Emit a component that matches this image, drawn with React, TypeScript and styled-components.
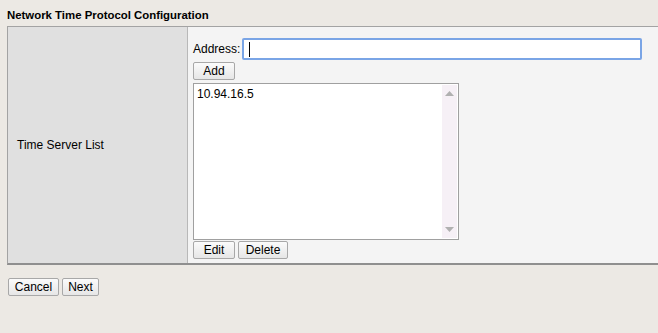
import * as React from "react";
import styled, {createGlobalStyle} from "styled-components";

const GlobalStyle = createGlobalStyle`
    html, body {
        margin: 0;
        padding: 0;
        background: #ece9e4;
        overflow: hidden;
    }
    body {
        font-family: "Liberation Sans", Arial, sans-serif;
        font-size: 12px;
        color: #000;
    }
`;

const Page = styled.div`
    width: 658px;
    height: 333px;
    padding-top: 8px;
    box-sizing: border-box;
`;

const Title = styled.div`
    font-weight: bold;
    font-size: 11.4px;
    line-height: 14px;
    padding-left: 7px;
    height: 18px;
`;

const ConfigTable = styled.div`
    display: grid;
    grid-template-columns: 180px 1fr;
    margin-left: 7px;
    border-top: 1px solid #a3a3a3;
    border-left: 1px solid #a3a3a3;
    border-bottom: 2px solid #8f8f8f;
    height: 239px;
    box-sizing: border-box;
`;

const LabelCell = styled.div`
    display: flex;
    align-items: center;
    background: #e0e0e0;
    border-right: 1px solid #b8b8b8;
    padding-left: 9px;
`;

const ValueCell = styled.div`
    display: flex;
    flex-direction: column;
    background: #f4f4f4;
    padding: 11px 16px 0 5px;
`;

const AddressRow = styled.div`
    display: flex;
    align-items: center;
    gap: 2px;
`;

const AddressInput = styled.div`
    flex: 1;
    height: 18px;
    background: #fff;
    border: 2px solid #7aa5e6;
    border-radius: 2px;
    display: flex;
    align-items: center;
    padding-left: 5px;
`;

const Caret = styled.span`
    width: 1px;
    height: 15px;
    background: #000;
`;

const Button = styled.button<{ w: number }>`
    width: ${p => p.w}px;
    height: 18px;
    padding: 0;
    font-family: "Liberation Sans", Arial, sans-serif;
    font-size: 12px;
    color: #000;
    background: linear-gradient(#fbfbfb, #e6e6e6);
    border: 1px solid #a8a8a8;
    border-radius: 2px;
    box-sizing: border-box;
`;

const ButtonRow = styled.div<{ top: number }>`
    display: flex;
    gap: 3px;
    margin-top: ${p => p.top}px;
`;

const ListBox = styled.div`
    display: flex;
    width: 266px;
    height: 157px;
    margin-top: 3px;
    background: #fff;
    border: 1px solid #a0a0a0;
    box-sizing: border-box;
`;

const ListItems = styled.div`
    flex: 1;
    padding: 3px 0 0 3px;
    line-height: 14px;
`;

const ScrollTrack = styled.div`
    width: 15px;
    margin: 1px 1px 1px 0;
    background: #f6f0f6;
    display: flex;
    flex-direction: column;
    justify-content: space-between;
    align-items: center;
    padding: 6px 0 6px;
`;

const Footer = styled.div`
    display: flex;
    gap: 3px;
    padding: 13px 0 0 8px;
`;

const Arrow = ({up}: { up: boolean }) => (
    <svg width="9" height="5" viewBox="0 0 9 5">
        <path d={up ? "M0 5 L4.5 0 L9 5 Z" : "M0 0 L4.5 5 L9 0 Z"} fill="#b0b0b0"/>
    </svg>
);

const App = () => {
    return (
        <Page>
            <GlobalStyle/>
            <Title>Network Time Protocol Configuration</Title>
            <ConfigTable>
                <LabelCell>Time Server List</LabelCell>
                <ValueCell>
                    <AddressRow>
                        <span>Address:</span>
                        <AddressInput><Caret/></AddressInput>
                    </AddressRow>
                    <ButtonRow top={2}>
                        <Button w={42}>Add</Button>
                    </ButtonRow>
                    <ListBox>
                        <ListItems>10.94.16.5</ListItems>
                        <ScrollTrack>
                            <Arrow up={true}/>
                            <Arrow up={false}/>
                        </ScrollTrack>
                    </ListBox>
                    <ButtonRow top={1}>
                        <Button w={42}>Edit</Button>
                        <Button w={50}>Delete</Button>
                    </ButtonRow>
                </ValueCell>
            </ConfigTable>
            <Footer>
                <Button w={51}>Cancel</Button>
                <Button w={37}>Next</Button>
            </Footer>
        </Page>
    )
};

export default App;
